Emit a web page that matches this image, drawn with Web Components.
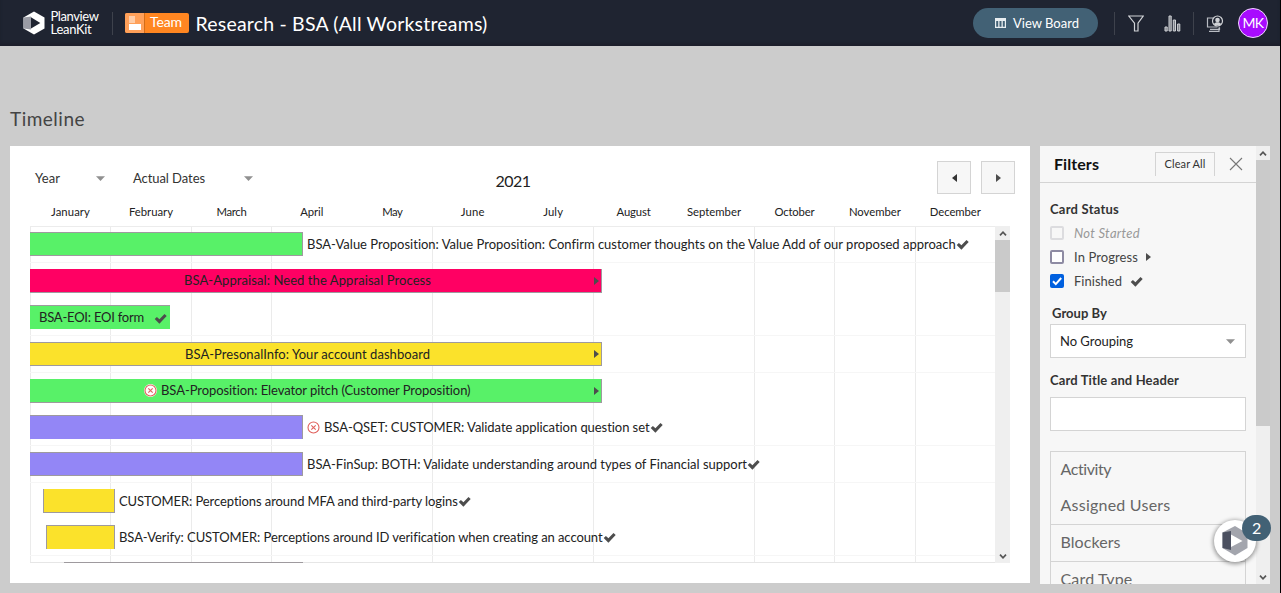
<!DOCTYPE html>
<html lang="en">
<head>
<meta charset="utf-8">
<title>Research - BSA timeline</title>
<style>
html,body{margin:0;height:100%;overflow:hidden;background:#ccc}
body{font-family:Lato,"Liberation Sans",sans-serif;color:#222}
</style>
</head>
<body>
<lk-app></lk-app>
<script>
// Single line of text tracked out (or in) to a given width.
class LkText extends HTMLElement{
  connectedCallback(){
    if(!this.shadowRoot){
      this.attachShadow({mode:'open'}).innerHTML=`<style>:host{display:block;flex:none;white-space:nowrap;line-height:1.3}span{display:inline-block}</style><span><slot></slot></span>`;
    }
    const s=this.shadowRoot.querySelector('span'),w=+this.getAttribute('w'),n=this.textContent.length;
    if(w){
      s.style.letterSpacing='0';
      const d=(w-s.getBoundingClientRect().width)/n;
      s.style.letterSpacing=d.toFixed(3)+'px';
      this.style.width=w+'px';
    }
  }
}
const ICONS={
  check:[13,11,'<path d="M.7 6.100 2.900 3.900l2.500 2.400L10.500.9l2.200 2.200-7.300 7.600z" fill="#4d4d4d"/>'],
  block:[13,13,'<circle cx="6.500" cy="6.500" r="6.500" fill="#fff"/><circle cx="6.500" cy="6.500" r="5.500" fill="none" stroke="#e0605c" stroke-width="1.100"/><path d="m4.300 4.300 4.400 4.400m0-4.400L4.300 8.700" stroke="#e0605c" stroke-width="1.100"/>'],
  right:[5,8,'<path d="M0 0 5 4 0 8z" fill="#4d4d4d"/>'],
  left:[5,8,'<path d="M5 0 0 4 5 8z" fill="#333"/>'],
  down:[9,5,'<path d="M0 .3h9L4.500 5z" fill="#909090"/>'],
  close:[14,14,'<path d="m1 1 12 12M13 1 1 13" stroke="#777" stroke-width="1.100"/>'],
  logo:[22,24,'<path d="M.5 6.500 11 .5l10.500 6v11l-10.500 6-10.500-6z" fill="#fff"/><path d="M.5 6.500 8 5.500v13l-7.500-1z" fill="#9a9ca5"/><path d="M8 6.200 17.300 12 8 17.500z" fill="#1f2431"/>'],
  logo2:[26,30,'<path d="M.5 6.500 13 0l12.500 7.500v14.500L13 29.500.5 22z" fill="#a3a5ad"/><path d="M.5 6.500 9 5v19l-8.500-2z" fill="#4b5060"/><path d="M9 8.500 20.500 15 9 21z" fill="#fff"/>'],
  board:[11,10,'<path d="M0 0h11v10H0z" fill="#e8eef1"/><path d="M1.200 3h2v5.800h-2zm3.300 0h2v5.800h-2zm3.300 0h2v5.800h-2z" fill="#426175"/>'],
  filter:[16,17,'<path d="M.8 1h14.400L10 8.200V16H6.500V8.200z" fill="none" stroke="#d0d2d6" stroke-width="1.200"/>'],
  chart:[17,17,'<path d="M1 12h2.200v4H1zM5 1h2.200v15H5zM9.300 5h2.200v11H9.300zM13.600 9h2.200v7h-2.200z" fill="#7d8189" stroke="#d0d2d6"/>'],
  users:[18,17,'<path d="M7 3H1.500v9h10M4 14.300h9.500v-2M3 16.400h10v-4" fill="none" stroke="#b9bcc3" stroke-width="1.200"/><circle cx="11.500" cy="6" r="5" fill="#1f2431" stroke="#d0d2d6" stroke-width="1.200"/><circle cx="11.500" cy="5" r="2.300" fill="#d0d2d6"/><path d="M8 9c1-2.400 6-2.400 7 0-1.500 2-5.500 2-7 0z" fill="#d0d2d6"/>'],
  up2:[8,5,'<path d="M1 4.300 4 1.200l3 3.100" fill="none" stroke="#555" stroke-width="1.700"/>'],
  down2:[8,5,'<path d="M1 .7 4 3.800 7 .7" fill="none" stroke="#555" stroke-width="1.700"/>']
};
class LkIcon extends HTMLElement{
  connectedCallback(){
    if(this.shadowRoot)return;
    const [w,h,p]=ICONS[this.getAttribute('n')];
    this.attachShadow({mode:'open'}).innerHTML=`<style>:host{display:block;flex:none;width:${w}px;height:${h}px}svg{display:block}</style><svg width="${w}" height="${h}" viewBox="0 0 ${w} ${h}">${p}</svg>`;
  }
}
// Scrollbar with arrows; "thumb" is the thumb height in px.
class LkScroll extends HTMLElement{
  connectedCallback(){
    if(this.shadowRoot)return;
    this.attachShadow({mode:'open'}).innerHTML=`<style>
:host{display:flex;flex-direction:column;box-sizing:border-box;width:14px;flex:none;background:#efefef;height:100%}
div{height:14px;flex:none;display:flex;align-items:center;justify-content:center}
.t{background:#cacaca;height:${this.getAttribute('thumb')}px}.e{margin-top:auto}
</style><div><lk-icon n="up2"></lk-icon></div><div class="t"></div><div class="e"><lk-icon n="down2"></lk-icon></div>`;
  }
}
class LkHeader extends HTMLElement{
  connectedCallback(){
    if(this.shadowRoot)return;
    this.attachShadow({mode:'open'}).innerHTML=`<style>
:host{display:flex;align-items:center;box-sizing:border-box;height:46px;background:#1f2431;color:#fff;padding-left:22.500px;box-shadow:inset 0 -3px 3px #1c1f2c}
.brand{margin-left:6px;width:50px;font-size:13px}
.brand lk-text{line-height:13px}
.sep{width:1px;height:23px;background:#3e424c;flex:none}
.team{display:flex;align-items:center;box-sizing:border-box;width:64px;height:20px;margin-left:12.500px;background:#ff8621;border-radius:2px;font-size:14px;overflow:hidden}
.team lk-text{margin-top:-1px}
.pic{width:20px;height:20px;background:#ffa059;border-right:1px solid #d46d18;margin-right:5px;display:grid;grid-template-rows:7px 6px;gap:1px;justify-items:start;align-content:center;padding-left:4px;box-sizing:border-box}
.pic i{display:block;width:6px;background:#ffcda8}.pic i+i{width:12px;background:#fff}
.title{font-size:19.500px;margin:1px 0 0 6.500px}
.view{display:flex;align-items:center;width:125px;height:30px;border-radius:15px;background:#426175;margin-left:auto;font-size:13px;flex:none}
.view lk-icon{margin:0 7px 0 22px}
.view lk-text{margin-top:1px}
.av{display:flex;align-items:center;justify-content:center;box-sizing:border-box;width:30px;height:30px;border-radius:50%;background:#a80bff;border:1px solid #f0d8ff;font-size:14px;margin:0 12px 0 14px}
</style>
<lk-icon n="logo"></lk-icon>
<div class="brand"><lk-text w="48">Planview</lk-text><lk-text w="41">LeanKit</lk-text></div>
<div class="sep" style="margin-left:11px"></div>
<div class="team"><div class="pic"><i></i><i></i></div><lk-text w="32">Team</lk-text></div>
<lk-text class="title" w="292">Research - BSA (All Workstreams)</lk-text>
<div class="view"><lk-icon n="board"></lk-icon><lk-text w="66">View Board</lk-text></div>
<div class="sep" style="margin:0 13px 0 16px"></div>
<lk-icon n="filter"></lk-icon>
<lk-icon n="chart" style="margin:0 12px 0 20px"></lk-icon>
<div class="sep"></div>
<lk-icon n="users" style="margin-left:12px"></lk-icon>
<div class="av"><lk-text w="21">MK</lk-text></div>`;
  }
}
// One card in the timeline: a coloured bar with the label inside it or after it.
class LkCard extends HTMLElement{
  connectedCallback(){
    if(this.shadowRoot)return;
    const a=k=>this.getAttribute(k);
    const inside=a('pad')!==null,b=a('b')||'';
    const label=a('label')?`${a('block')!==null?'<lk-icon n="block" class="bl"></lk-icon>':''}<lk-text w="${a('tw')}">${a('label')}</lk-text>`:'';
    const end=a('end')?`<lk-icon class="end" n="${a('end')}"></lk-icon>`:'';
    const side=k=>b.includes(k[0])?`border-${k}:1px solid #9e9a9e;`:'';
    this.attachShadow({mode:'open'}).innerHTML=`<style>
:host{display:flex;align-items:flex-start;box-sizing:border-box;height:${a('h')}px;padding:6px 0 0 ${a('x')||0}px;font-size:13px;${a('line')!==null?'border-bottom:1px solid #f6f6f6;':''}}
.bar{box-sizing:border-box;flex:none;width:${a('w')}px;height:24px;background:${a('c')};${side('top')}${side('right')}${side('bottom')}${side('left')}${inside?`padding-left:${a('pad')}px`:''}}
.bar,.out{display:flex;align-items:center}
.out{height:24px;margin-left:4px}
.bl{margin-right:4px}
.bar .end{margin-left:auto;margin-right:${a('end')==='check'?3:2}px}
.bar .end[n=check]{transform:translateY(1px)}
</style><div class="bar">${inside?label+end:''}</div>${inside?'':`<div class="out">${label}${end}</div>`}`;
  }
}
class LkTimeline extends HTMLElement{
  connectedCallback(){
    if(this.shadowRoot)return;
    const months=[['January',39],['February',44],['March',30],['April',23],['May',20],['June',24],['July',20],['August',34],['September',54],['October',40],['November',52],['December',51]];
    const G='#58f168',Y='#fbe22b',P='#9386f6';
    const cards=[
      [37,0,273,G,'trb','line','BSA-Value Proposition: Value Proposition: Confirm customer thoughts on the Value Add of our proposed approach',649,null,'check'],
      [36,0,572,'#ff0063','rb','','BSA-Appraisal: Need the Appraisal Process',247,154,'right'],
      [37,0,140,G,'t','line','BSA-EOI: EOI form',105,9,'check'],
      [37,0,572,Y,'trb','line','BSA-PresonalInfo: Your account dashboard',245,155,'right'],
      [36,0,572,G,'rb','','BSA-Proposition: Elevator pitch (Customer Proposition)',310,114,'right','block'],
      [37,0,273,P,'tr','line','BSA-QSET: CUSTOMER: Validate application question set',326,null,'check','block'],
      [37,0,273,P,'trb','line','BSA-FinSup: BOTH: Validate understanding around types of Financial support',440,null,'check'],
      [36,13,72,Y,'lrb','','CUSTOMER: Perceptions around MFA and third-party logins',339,null,'check'],
      [37,16,69,Y,'tlr','line','BSA-Verify: CUSTOMER: Perceptions around ID verification when creating an account',484,null,'check'],
      [37,34,239,Y,'t','','',0,null,'']
    ];
    const line=(x,c)=>`linear-gradient(${c},${c}) ${x}px 0/1px 100% no-repeat`;
    this.attachShadow({mode:'open'}).innerHTML=`<style>
:host{display:flex;flex-direction:column;box-sizing:border-box;width:1020px;height:437px;background:#fff;padding:4px 20px 0;flex:none}
.bar{display:grid;grid-template-columns:1fr auto 1fr;height:54px;padding-top:7px;box-sizing:border-box;align-items:center;font-size:13px}
.l,.r{display:flex;align-items:center}.l{padding-left:5px;margin-top:-4px;color:#333}
.r{justify-content:flex-end;gap:10px;margin-right:-5px;margin-top:-6px}
.r div{width:32px;height:31px;border:1px solid #d4d4d4;background:#f7f7f7;display:flex;align-items:center;justify-content:center}
.year{font-size:16px;margin:1px 14px 0 0}
.m{display:grid;grid-template-columns:repeat(12,80.450px);box-sizing:border-box;height:22px;justify-items:center;align-items:start;font-size:11.300px;padding:1px 0 0 .3px}
.view{display:flex;height:337px;overflow:hidden}
.rows{box-sizing:border-box;width:965px;height:337px;overflow:hidden;border-top:1px solid #ececec;background:linear-gradient(#e6e6e6,#e6e6e6) 0 100%/100% 1px no-repeat,${[0,80,161,241,402,563,724,804,885].map(x=>line(x,'#ebebeb')).join(',')}}
.shift{margin-top:-1px}
lk-scroll{width:15px}
</style>
<div class="bar"><div class="l"><lk-text w="25">Year</lk-text><lk-icon n="down" style="margin:0 28px 0 36px"></lk-icon><lk-text w="72">Actual Dates</lk-text><lk-icon n="down" style="margin-left:39px"></lk-icon></div>
<lk-text class="year" w="35">2021</lk-text>
<div class="r"><div><lk-icon n="left"></lk-icon></div><div><lk-icon n="right"></lk-icon></div></div></div>
<div class="m">${months.map(([m,w])=>`<lk-text w="${w}">${m}</lk-text>`).join('')}</div>
<div class="view"><div class="rows"><div class="shift">${cards.map(([h,x,w,c,b,line,label,tw,pad,end,block])=>`<lk-card h="${h}" x="${x}" w="${w}" c="${c}" b="${b}" ${line} label="${label}" tw="${tw}" ${pad===null?'':`pad="${pad}"`} end="${end}" ${block||''}></lk-card>`).join('')}</div></div><lk-scroll thumb="52"></lk-scroll></div>`;
  }
}
class LkFilters extends HTMLElement{
  connectedCallback(){
    if(this.shadowRoot)return;
    this.attachShadow({mode:'open'}).innerHTML=`<style>
:host{display:flex;width:230px;height:438px;flex:none;overflow:hidden}
.p{width:216px;height:438px;overflow:hidden;background:#f7f7f7;font-size:13px;color:#444;flex:none}
.h{display:flex;align-items:center;height:36px;border-bottom:1px solid #d4d4d4;padding-left:14px}
.h lk-text{color:#111;font-weight:700;font-size:16px}
.c{box-sizing:border-box;width:60px;height:24px;border:1px solid #d4d4d4;border-bottom:0;margin:0 14px 0 56px;display:flex;align-items:center;justify-content:center}
.c lk-text{font-size:11px;font-weight:400;color:#333}
.b{padding:0 10px}
b{display:block;color:#333;font-weight:700}
.o{display:flex;align-items:center;height:24px}
.o lk-text{margin-top:1px}
.o i{box-sizing:border-box;width:14px;height:14px;border:2px solid #8e8ba3;border-radius:2px;background:#fff;margin-right:10px;flex:none;display:block}
.o.d{color:#999;font-style:italic}.o.d i{border-color:#dcdcdf;background:#f7f7f7}
.o.k i{border:0;background:#0060df}
.o svg{display:block}
.s,.in{box-sizing:border-box;width:196px;height:34px;border:1px solid #d4d4d4;background:#fff}
.s{display:flex;align-items:center;justify-content:space-between;padding:0 10px 0 9px;color:#222}
.list{border:1px solid #d4d4d4;margin-top:20px;font-size:16px;color:#666}
.list div{box-sizing:border-box;height:37px;display:flex;align-items:center;padding:0 0 2px 9.500px;border-bottom:1px solid transparent}
.list .u{border-color:#d4d4d4}
.list .u:nth-child(2){height:36px}
</style><div class="p">
<div class="h"><lk-text w="45">Filters</lk-text><div class="c"><lk-text w="41">Clear All</lk-text></div><lk-icon n="close"></lk-icon></div>
<div class="b">
<b style="padding-top:18px;height:20px"><lk-text w="69">Card Status</lk-text></b>
<div class="o d"><i></i><lk-text w="66">Not Started</lk-text></div>
<div class="o"><i></i><lk-text w="64">In Progress</lk-text><lk-icon n="right" style="margin-left:8px"></lk-icon></div>
<div class="o k"><i><svg width="14" height="14" viewBox="0 0 14 14"><path d="m3 7.200 2.800 2.900L11.200 4" fill="none" stroke="#fff" stroke-width="2"/></svg></i><lk-text w="48">Finished</lk-text><lk-icon n="check" style="margin-left:8px"></lk-icon></div>
<b style="padding:12px 0 0 2px;height:19px"><lk-text w="55">Group By</lk-text></b>
<div class="s"><lk-text w="73">No Grouping</lk-text><lk-icon n="down"></lk-icon></div>
<b style="padding-top:14px;height:25px"><lk-text w="129">Card Title and Header</lk-text></b>
<div class="in"></div>
<div class="list"><div><lk-text w="51">Activity</lk-text></div><div class="u"><lk-text w="110">Assigned Users</lk-text></div><div class="u"><lk-text w="60">Blockers</lk-text></div><div><lk-text w="72">Card Type</lk-text></div></div>
</div></div><lk-scroll thumb="266"></lk-scroll>`;
  }
}
class LkHelp extends HTMLElement{
  connectedCallback(){
    if(this.shadowRoot)return;
    this.attachShadow({mode:'open'}).innerHTML=`<style>
:host{position:absolute;left:1214px;top:520px;width:42px;height:42px;border-radius:50%;background:#fff;box-shadow:0 1px 4px 1px rgba(0,0,0,.4);display:flex;align-items:center;justify-content:center}
div{position:absolute;left:28px;top:-5px;width:29px;height:26px;border-radius:13px;background:#426175;color:#fff;font-size:16px;display:flex;align-items:center;justify-content:center}
</style><lk-icon n="logo2"></lk-icon><div><lk-text w="9">2</lk-text></div>`;
  }
}
class LkApp extends HTMLElement{
  connectedCallback(){
    if(this.shadowRoot)return;
    this.attachShadow({mode:'open'}).innerHTML=`<style>
:host{display:flex;flex-direction:column;position:relative;box-sizing:border-box;width:1281px;height:593px;border-right:1px solid #000;background:#ccc;overflow:hidden}
.t{height:39px;margin-top:61px;padding-left:10px;font-size:19px;color:#444}
.main{display:flex;gap:10px;padding-left:10px;align-items:flex-start}
</style><lk-header></lk-header><div class="t"><lk-text w="75">Timeline</lk-text></div><div class="main"><lk-timeline></lk-timeline><lk-filters></lk-filters></div><lk-help></lk-help>`;
  }
}
customElements.define('lk-text',LkText);
customElements.define('lk-icon',LkIcon);
customElements.define('lk-scroll',LkScroll);
customElements.define('lk-card',LkCard);
customElements.define('lk-header',LkHeader);
customElements.define('lk-timeline',LkTimeline);
customElements.define('lk-filters',LkFilters);
customElements.define('lk-help',LkHelp);
customElements.define('lk-app',LkApp);
</script>
</body>
</html>
